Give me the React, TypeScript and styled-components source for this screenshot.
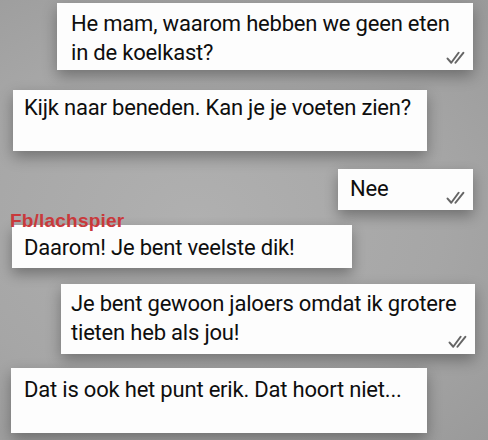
import React from "react";
import styled, { createGlobalStyle } from "styled-components";

const Global = createGlobalStyle`
  html, body {
    margin: 0;
    padding: 0;
    background: #a8a8a8;
  }
`;

type Msg = {
  text: React.ReactNode;
  out?: boolean;
  left: number;
  width: number;
  height: number;
  gap: number;
  padX: number;
  padTop: number;
};

const messages: Msg[] = [
  {
    text: (
      <>
        He mam, waarom hebben we geen eten
        <br />
        in de koelkast?
      </>
    ),
    out: true,
    left: 57,
    width: 416,
    height: 67,
    gap: 3,
    padX: 14,
    padTop: 6,
  },
  {
    text: "Kijk naar beneden. Kan je je voeten zien?",
    left: 13,
    width: 414,
    height: 61,
    gap: 20,
    padX: 11,
    padTop: 3,
  },
  { text: "Nee", out: true, left: 338, width: 135, height: 41, gap: 18, padX: 12, padTop: 5 },
];

const messages2: Msg[] = [
  {
    text: (
      <>
        Je bent gewoon jaloers omdat ik grotere
        <br />
        tieten heb als jou!
      </>
    ),
    out: true,
    left: 61,
    width: 414,
    height: 70,
    gap: 16,
    padX: 10,
    padTop: 5,
  },
  {
    text: "Dat is ook het punt erik. Dat hoort niet...",
    left: 11,
    width: 416,
    height: 65,
    gap: 14,
    padX: 13,
    padTop: 7,
  },
];

const App = () => {
  return (
    <>
      <Global />
      <Screen>
        {messages.map((m, i) => (
          <Message key={i} m={m} />
        ))}
        <Watermark>Fb/lachspier</Watermark>
        <Message
          m={{
            text: "Daarom! Je bent veelste dik!",
            left: 12,
            width: 340,
            height: 43,
            gap: 0,
            padX: 12,
            padTop: 8,
          }}
        />
        {messages2.map((m, i) => (
          <Message key={i} m={m} />
        ))}
      </Screen>
    </>
  );
};

const Message = ({ m }: { m: Msg }) => (
  <Bubble
    $left={m.left}
    $width={m.width}
    $height={m.height}
    $gap={m.gap}
    $padX={m.padX}
    $padTop={m.padTop}
  >
    <Text>{m.text}</Text>
    {m.out && (
      <Ticks viewBox="0 0 20 12">
        <path d="M1.5 7 L5 11 L12 1.5" />
        <path d="M9 11 L16.5 1.5" />
      </Ticks>
    )}
  </Bubble>
);

export default App;

const Screen = styled.div`
  width: 488px;
  height: 440px;
  overflow: hidden;
  display: flex;
  flex-direction: column;
  align-items: flex-start;
  background: radial-gradient(ellipse at 40% 50%, #b0b0b0 0%, #a6a6a6 60%, #9a9a9a 100%);
  font-family: Roboto, "Liberation Sans", sans-serif;
`;

const Bubble = styled.div<{
  $left: number;
  $width: number;
  $height: number;
  $gap: number;
  $padX: number;
  $padTop: number;
}>`
  position: relative;
  box-sizing: border-box;
  margin-left: ${(p) => p.$left}px;
  margin-top: ${(p) => p.$gap}px;
  width: ${(p) => p.$width}px;
  height: ${(p) => p.$height}px;
  padding: ${(p) => p.$padTop}px ${(p) => p.$padX}px 0;
  background: #fdfdfd;
  box-shadow: 0 6px 14px rgba(0, 0, 0, 0.32);
`;

const Text = styled.div`
  font-size: 22px;
  line-height: 29px;
  color: #0e0e0e;
  letter-spacing: -0.2px;
`;

const Ticks = styled.svg`
  position: absolute;
  right: 6px;
  bottom: 6px;
  width: 21px;
  height: 13px;
  fill: none;
  stroke: #666;
  stroke-width: 1.9;
  stroke-linecap: round;
  stroke-linejoin: round;
`;

const Watermark = styled.div`
  margin: 3px 0 -4px 10px;
  font-family: "Liberation Sans", Arial, sans-serif;
  font-weight: 700;
  font-size: 19px;
  letter-spacing: 0.2px;
  line-height: 16px;
  color: #c9393b;
  position: relative;
  z-index: 1;
`;
